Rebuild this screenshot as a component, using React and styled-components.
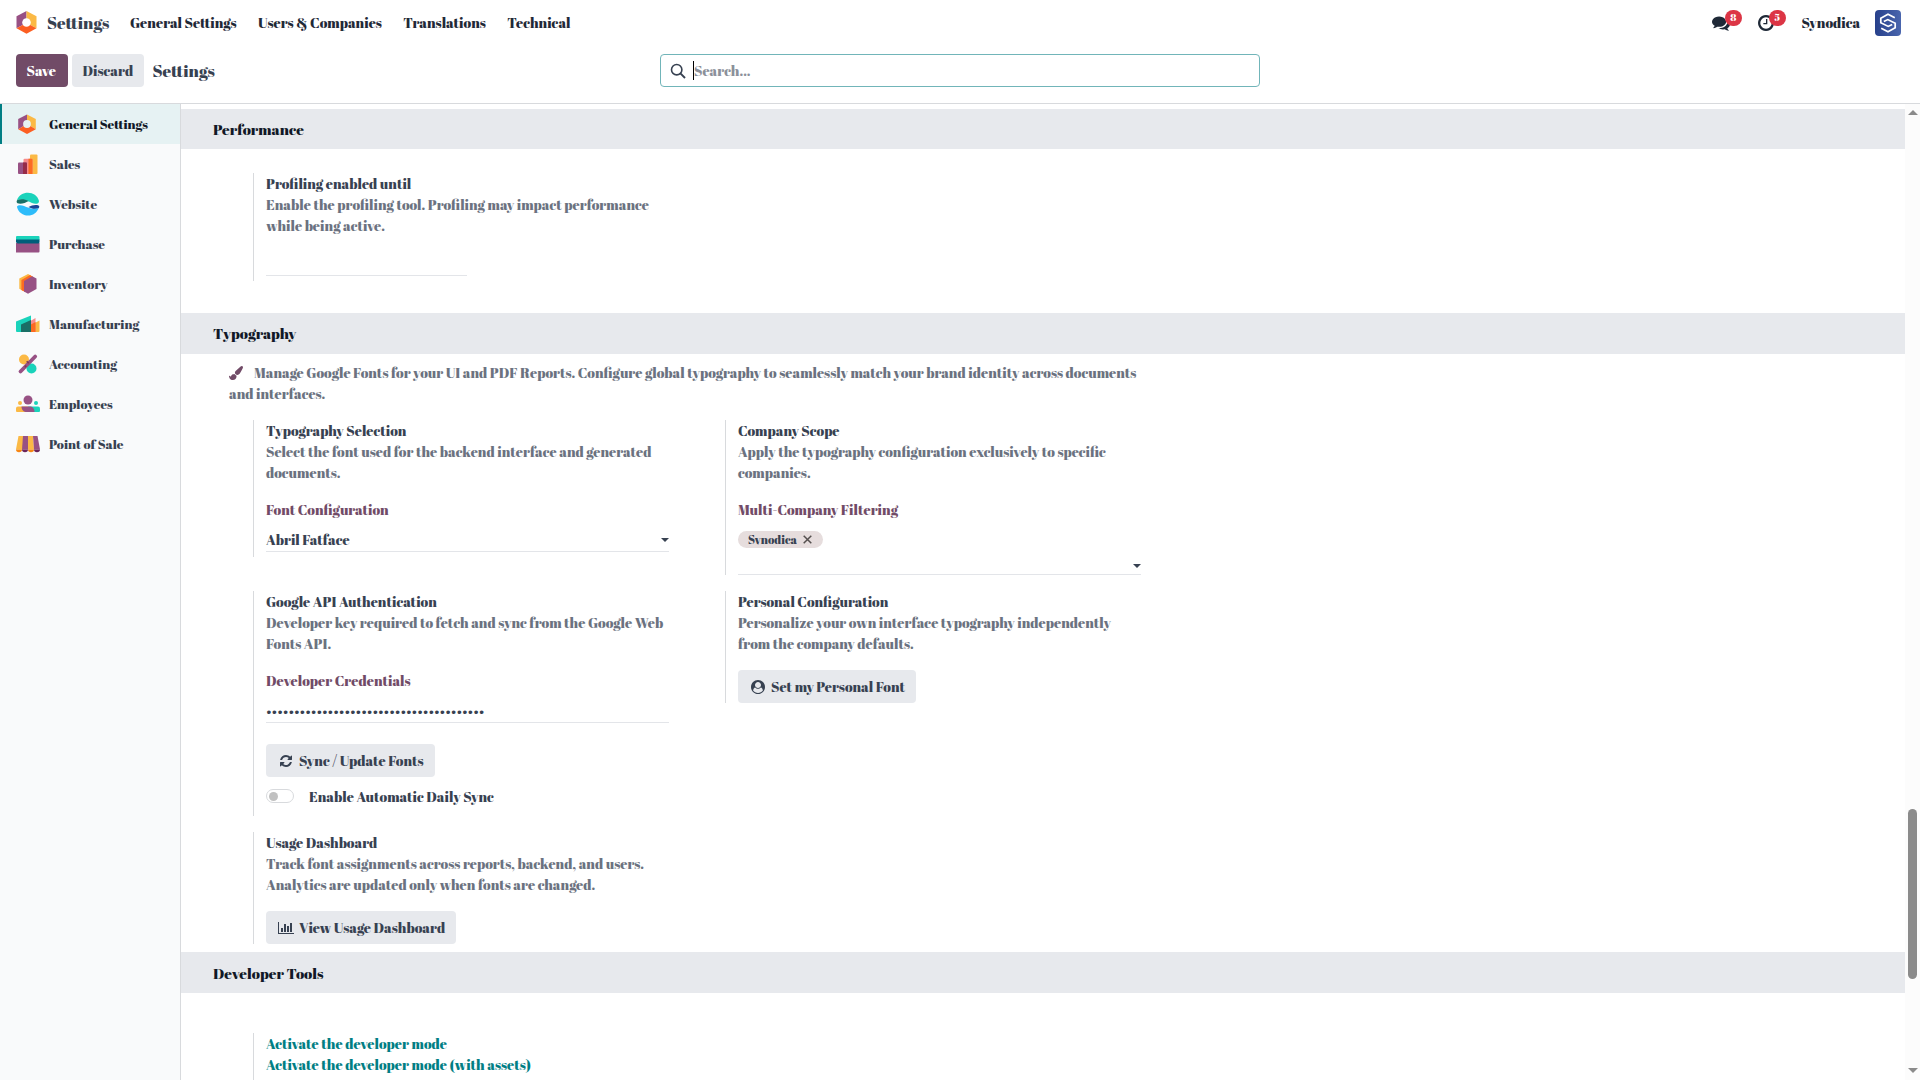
import styled, { createGlobalStyle } from 'styled-components';

const GlobalStyle = createGlobalStyle`
  *, *::before, *::after { box-sizing: border-box; }

  body {
    margin: 0;
    overflow: hidden;
    background: #fff;
    color: #374151;
    font-family: 'Abril Fatface', 'Liberation Serif', serif;
    font-size: 14px;
    font-weight: 400;
    line-height: 21px;
  }

  svg { display: block; flex: none; }
`;

const Page = styled.div`
  display: flex;
  flex-direction: column;
  height: 1080px;
`;

/* ---------- top bar ---------- */

const Navbar = styled.nav`
  display: flex;
  align-items: center;
  flex: none;
  height: 46px;
  padding: 0 19px 1px 16px;
  color: #1f2937;
`;

const Brand = styled.div`
  display: flex;
  align-items: center;
  gap: 10px;
  width: 114px;
  color: #374151;
  font-size: 16.8px;
`;

const NavLink = styled.a`
  margin-right: 21.5px;
  white-space: nowrap;
`;

const Systray = styled.div`
  display: flex;
  align-items: center;
  margin-left: auto;
`;

const TrayItem = styled.div`
  position: relative;
  display: flex;
  align-items: center;
  width: ${({ $width }) => $width}px;
  height: 17px;
`;

const Badge = styled.span`
  position: absolute;
  top: -4px;
  left: ${({ $left }) => $left}px;
  width: 17.5px;
  height: 16px;
  border-radius: 8px;
  background: #dc3545;
  color: #fff;
  font-size: 10px;
  line-height: 15px;
  text-align: center;
`;

const Company = styled.span`
  width: 73.5px;
`;

const AvatarFrame = styled.span`
  margin-top: 1px;
`;

/* ---------- control panel ---------- */

const ControlPanel = styled.header`
  display: grid;
  grid-template-columns: 644px 600px;
  align-items: start;
  flex: none;
  height: 58px;
  padding: 8px 16px 0;
  border-bottom: 1px solid #d8dadd;
`;

const Actions = styled.div`
  display: flex;
  align-items: center;
  gap: 4px;
`;

const Button = styled.button`
  display: flex;
  align-items: center;
  width: ${({ $width }) => $width}px;
  height: 33px;
  padding: 0 0 0 ${({ $pad = 10.5 }) => $pad}px;
  border: 0;
  border-radius: 4px;
  background: ${({ $primary }) => ($primary ? '#714b67' : '#e7e9ed')};
  color: ${({ $primary }) => ($primary ? '#fff' : '#374151')};
  font: inherit;
  white-space: nowrap;
`;

const ButtonIcon = styled.span`
  width: ${({ $width }) => $width}px;
`;

const PageTitle = styled.h1`
  margin: 0 0 0 4.5px;
  font-size: 16.8px;
  font-weight: 400;
  line-height: 27px;
`;

const SearchBox = styled.div`
  display: flex;
  align-items: center;
  height: 33px;
  padding-left: 9px;
  border: 1px solid #71b5b9;
  border-radius: 4px;
`;

const Placeholder = styled.span`
  display: flex;
  align-items: center;
  height: 19px;
  margin-left: 7px;
  border-left: 1px solid #000;
  color: #8b909a;
`;

/* ---------- body ---------- */

const Main = styled.main`
  display: flex;
  flex: 1;
  min-height: 0;
`;

const Sidebar = styled.aside`
  flex: none;
  width: 181px;
  border-right: 1px solid #d8dadd;
  background: #f9fafb;
  font-size: 13px;
`;

const Tab = styled.div`
  display: flex;
  align-items: center;
  gap: ${({ $active }) => ($active ? 10 : 9)}px;
  height: 40px;
  padding-left: ${({ $active }) => ($active ? 13 : 16)}px;
  border-left: ${({ $active }) => ($active ? '2px solid #017e84' : '0')};
  background: ${({ $active }) => ($active ? '#e6f2f3' : 'transparent')};
  color: ${({ $active }) => ($active ? '#111827' : '#374151')};
`;

const Content = styled.div`
  flex: 1;
  min-width: 0;
  padding-top: 5px;
  overflow: hidden;
`;

const SectionTitle = styled.h2`
  display: flex;
  align-items: center;
  height: ${({ $height = 41 }) => $height}px;
  margin: 0;
  padding: ${({ $top = 0 }) => $top}px 0 0 32px;
  background: #e7e9ed;
  color: #111827;
  font-size: 15px;
  font-weight: 400;
`;

const SettingGrid = styled.div`
  display: grid;
  grid-template-columns: 416px 416px;
  column-gap: 56px;
  row-gap: 16px;
  align-items: start;
  padding: ${({ $padding }) => $padding};
`;

const SettingBox = styled.section`
  height: ${({ $height }) => $height}px;
  padding-left: 12px;
  border-left: 1px solid #d8dadd;
`;

const Line = styled.div`
  height: 21px;
  white-space: nowrap;
`;

const Muted = styled(Line)`
  color: #6b7280;
`;

const DevLink = styled(Line)`
  color: #017e84;
`;

const FieldLabel = styled(Line)`
  margin: 16px 0 8px;
  color: #714b67;
`;

const Field = styled.div`
  display: flex;
  align-items: center;
  justify-content: space-between;
  width: 403px;
  height: 24px;
  border-bottom: 1px solid #e3e5e9;
`;

const DateField = styled(Field)`
  width: 201px;
  margin-top: 16px;
`;

const TagInput = styled(Field)`
  justify-content: flex-end;
  padding-top: 7px;
`;

const Caret = styled.i`
  border: 4px solid transparent;
  border-top-color: #374151;
  border-bottom: 0;
`;

const TagRow = styled.div`
  height: 23px;
  padding-top: 3px;
`;

const Tag = styled.span`
  display: flex;
  align-items: center;
  gap: 6px;
  width: 85px;
  height: 17px;
  padding: 0 0 1px 10px;
  border-radius: 9px;
  background: #e6dddd;
  font-size: 11.7px;
`;

/* tag labels are cut just under the baseline */
const TagLabel = styled.span`
  height: 12px;
  overflow: hidden;
  line-height: 13px;
`;

const Intro = styled.p`
  margin: 0;
  padding: 8px 0 0 48px;
  color: #6b7280;
  white-space: nowrap;
`;

const IntroRow = styled.span`
  display: flex;
  align-items: center;
  gap: 11px;
  height: 21px;
`;

const ButtonRow = styled.div`
  margin-top: ${({ $top = 16 }) => $top}px;
`;

const SwitchRow = styled.div`
  display: flex;
  align-items: center;
  gap: 15px;
  height: 21px;
  margin-top: 9px;
`;

const Switch = styled.span`
  display: flex;
  align-items: center;
  width: 28px;
  height: 14px;
  margin-top: -1px;
  padding-left: 2px;
  border: 1px solid #d8dadd;
  border-radius: 7px;
`;

const Knob = styled.i`
  width: 9px;
  height: 9px;
  border-radius: 50%;
  background: #c1c1c1;
`;

/* ---------- scrollbar ---------- */

const Scrollbar = styled.div`
  display: flex;
  flex-direction: column;
  align-items: center;
  flex: none;
  width: 15px;
  padding: 6px 0 7px;
  background: #fcfcfc;
`;

const Arrow = styled.i`
  border: 5px solid transparent;
  ${({ $up }) =>
    $up
      ? 'border-bottom-color: #8b8b8b; border-top: 0;'
      : 'border-top-color: #8b8b8b; border-bottom: 0; margin-top: auto;'}
`;

const Thumb = styled.i`
  width: 9px;
  height: 170px;
  margin-top: 694px;
  border-radius: 5px;
  background: #8b8b8b;
`;

/* ---------- icons ---------- */

const SettingsIcon = () => (
  <svg width="24" height="24" viewBox="0 0 24 24">
    <path d="M12 2.500 3.200 7v10.200L12 12z" fill="#985184" />
    <path d="M12 2.500 20.800 7v10.200L12 12z" fill="#fbb945" />
    <path d="M3.200 17.200 12 12l8.800 5.200L12 22z" fill="#fc5f22" />
    <circle cx="12" cy="12" r="3.900" fill="#e6f2f3" />
  </svg>
);

const BrandIcon = () => (
  <svg width="21" height="23" viewBox="0 0 21 23">
    <path d="M10.500 0 .5 5.300v11.900L10.500 12z" fill="#985184" />
    <path d="M10.500 0l10 5.300v11.900L10.500 12z" fill="#fbb945" />
    <path d="M.5 17.200 10.500 12l10 5.200-10 5.600z" fill="#fc5f22" />
    <circle cx="10.500" cy="11.500" r="4.300" fill="#fff" />
  </svg>
);

const SalesIcon = () => (
  <svg width="24" height="24" viewBox="0 0 24 24">
    <rect x="14" y="2.500" width="7.500" height="19.500" rx="1" fill="#fbb945" />
    <rect x="7.500" y="6.800" width="9" height="15.200" rx="1" fill="#f78c8c" />
    <path d="M12.500 6.800h3a1 1 0 0 1 1 1V22h-4z" fill="#fc6b22" />
    <rect x="2" y="10.500" width="9" height="11.500" rx="1" fill="#985184" />
    <path d="M7 10.500h3a1 1 0 0 1 1 1V22H7z" fill="#962b48" />
  </svg>
);

const WebsiteIcon = () => (
  <svg width="24" height="24" viewBox="0 0 24 24">
    <path d="M1 8C3 3 7 .8 12 .8S21.500 3.500 23 9c.3 3-4 3.500-7 2-4-2-9-4-15-3z" fill="#1ad3bb" />
    <path d="M1.300 8C5 6.500 9 7 12.500 9c-3 2-8 3.500-11 2.200C.3 10.500.5 9 1.300 8z" fill="#1a6f66" />
    <path d="M22.800 16C21 20.500 17 23.600 12 23.600S2.500 20.500 1 15c-.3-2 4-2.500 7-1 4 2 9 3.500 14.800 2z" fill="#2ebcfa" />
    <path d="M22.800 16c-3.600 1.400-7 .8-10.300-1 3-1.600 7-2.600 10-1.500 1 .5.900 1.600.3 2.500z" fill="#1a4597" />
  </svg>
);

const PurchaseIcon = () => (
  <svg width="24" height="24" viewBox="0 0 24 24">
    <path d="M1 4h21.500a1 1 0 0 1 1 1v3H0V5a1 1 0 0 1 1-1z" fill="#1ad3bb" />
    <path d="M0 11h23.500v8.500a1 1 0 0 1-1 1H0z" fill="#985184" />
    <path d="M0 7.500h23.500V10a1.500 1.500 0 0 1-1.500 1.500H2A2 2 0 0 1 0 9.500z" fill="#005e7a" />
  </svg>
);

const InventoryIcon = () => (
  <svg width="24" height="24" viewBox="0 0 24 24">
    <path d="M12 2 15 3.600 7 8.500V19l-3.700-2.200V6.600z" fill="#fbb945" />
    <path d="M14 3.100 17 4.700 9 9.300V20l-3.600-2V8z" fill="#fc6b22" />
    <path d="M16.200 4.300 20.500 6.600v10.500L12 21.800l-4-2.200V9z" fill="#985184" />
  </svg>
);

const ManufacturingIcon = () => (
  <svg width="24" height="24" viewBox="0 0 24 24">
    <path d="M15 13 23.500 8.500V19a1 1 0 0 1-1 1H15z" fill="#fbb945" />
    <path d="M11 11l8.500-5v14H11z" fill="#f78c8c" />
    <path d="M14 13l5.500-3v10H14z" fill="#fc6b22" />
    <path d="M0 9.500 15 3.500V20H1a1 1 0 0 1-1-1z" fill="#1ad3bb" />
    <path d="M5 12.500l10-4.500v12H5z" fill="#1a6f66" />
  </svg>
);

const AccountingIcon = () => (
  <svg width="24" height="24" viewBox="0 0 24 24">
    <circle cx="8" cy="7.500" r="5" fill="#fbb945" />
    <circle cx="15.500" cy="16.500" r="5" fill="#1ad3bb" />
    <path d="M4.500 19.500l14.700-15" stroke="#985184" strokeWidth="3.800" strokeLinecap="round" />
    <path d="M8.800 15.100l1.500-1.500M12.700 11.200l-2-2" stroke="#7b3a52" strokeWidth="1.500" />
  </svg>
);

const EmployeesIcon = () => (
  <svg width="24" height="24" viewBox="0 0 24 24">
    <circle cx="12" cy="8" r="4.500" fill="#985184" />
    <circle cx="4" cy="11" r="2" fill="#fbb945" />
    <circle cx="20" cy="11" r="2" fill="#1ad3bb" />
    <path d="M2 14.500h10v5.500H1a1 1 0 0 1-1-1v-2.500a2 2 0 0 1 2-2z" fill="#fbb945" />
    <path d="M12 14.500h10a2 2 0 0 1 2 2V19a1 1 0 0 1-1 1H12z" fill="#1ad3bb" />
    <path d="M5.500 14.500H14c3 0 4.500 2.500 4.500 5.500H11c-3.500 0-5.500-2-5.500-5.500z" fill="#985184" />
  </svg>
);

const PosIcon = () => (
  <svg width="24" height="24" viewBox="0 0 24 24">
    <path d="M2.500 4H7v13.500H0z" fill="#fbb945" />
    <path d="M7 4h5v13.500H6z" fill="#985184" />
    <path d="M12 4h5l1 13.500h-6z" fill="#fbb945" />
    <path d="M17 4h4.500L24 17.500h-6z" fill="#985184" />
    <path d="M0 17.500h6a3 2.800 0 0 1-6 0zM12 17.500h6a3 2.800 0 0 1-6 0z" fill="#f78613" />
    <path d="M6 17.500h6a3 2.800 0 0 1-6 0zM18 17.500h6a3 2.800 0 0 1-6 0z" fill="#6c2459" />
  </svg>
);

const CommentsIcon = () => (
  <svg width="18" height="18" viewBox="0 0 1792 1792" fill="currentColor">
    <path d="M1408 768q0 139-94 257t-256.500 186.500-353.500 68.500q-86 0-176-16-124 88-278 128-36 9-86 16h-3q-11 0-20.500-8t-11.500-21q-1-3-1-6.500t.5-6.500 2-6l2.500-5 3.500-5.500 4-5 4.500-5 4-4.500q5-6 23-25t26-29.500 22.500-29 25-38.500 20.500-44q-124-72-195-177t-71-224q0-139 94-257t256.500-186.500 353.500-68.500 353.500 68.500 256.500 186.500 94 257zm384 256q0 120-71 224.500t-195 176.500q10 24 20.500 44t25 38.500 22.500 29 26 29.500 23 25q1 1 4 4.500t4.500 5 4 5 3.500 5.500l2.500 5 2 6 .5 6.500-1 6.500q-3 14-13 22t-22 7q-50-7-86-16-154-40-278-128-90 16-176 16-271 0-472-132 58 4 88 4 161 0 309-45t264-129q125-92 192-212t67-254q0-77-23-152 129 71 204 178t75 230z" />
  </svg>
);

const ClockIcon = () => (
  <svg width="16" height="16" viewBox="128 128 1536 1536" fill="currentColor">
    <path d="M1024 544v448q0 14-9 23t-23 9h-320q-14 0-23-9t-9-23v-64q0-14 9-23t23-9h224v-352q0-14 9-23t23-9h64q14 0 23 9t9 23zm416 352q0-148-73-273t-198-198-273-73-273 73-198 198-73 273 73 273 198 198 273 73 273-73 198-198 73-273zm224 0q0 209-103 385.500t-279.500 279.500-385.500 103-385.500-103-279.500-279.500-103-385.500 103-385.500 279.500-279.500 385.500-103 385.500 103 279.500 279.500 103 385.500z" />
  </svg>
);

const AvatarIcon = () => (
  <svg width="26" height="26" viewBox="0 0 26 26">
    <defs>
      <linearGradient id="avatar" x1="0" x2="1" y1="0" y2="0">
        <stop offset="0" stopColor="#27408b" />
        <stop offset="1" stopColor="#4a66ae" />
      </linearGradient>
    </defs>
    <rect width="26" height="26" rx="4" fill="url(#avatar)" />
    <g fill="none" stroke="#fff" strokeWidth="1.700">
      <path d="M19.800 7.800 13 4.300 5.800 8.300v4.500l7.400 3.600 4-2" />
      <path d="M6.200 18.200 13 21.700l7.200-4v-4.500L12.800 9.600l-4 2" />
    </g>
  </svg>
);

const SearchIcon = () => (
  <svg width="16" height="16" viewBox="0 0 16 16" fill="none" stroke="#374151" strokeWidth="1.600">
    <circle cx="6.700" cy="6.700" r="5.200" />
    <path d="M10.400 10.400l4.600 4.600" strokeWidth="1.900" />
  </svg>
);

const BrushIcon = () => (
  <svg width="14" height="14" viewBox="0 0 1792 1792" fill="#714b67">
    <path d="M1615 0q70 0 122.500 46.500t52.500 116.500q0 63-45 151-332 629-465 752-97 91-218 91-126 0-216.500-92.500t-90.500-219.500q0-128 92-212l638-579q59-54 130-54zm-909 1034q39 76 106.500 130t150.500 76l1 71q4 213-129.500 347t-348.500 134q-123 0-218-46.500t-152.500-127.500-86.500-183-29-220q7 5 41 30t62 44.500 59 36.500 46 17q41 0 55-37 25-66 57.500-112.500t69.500-76 88-47.500 103-25.500 125-10.500z" />
  </svg>
);

const RefreshIcon = () => (
  <svg width="12" height="12" viewBox="0 0 1536 1536" fill="currentColor">
    <path d="M1511 928q0 5-1 7-64 268-268 434.500t-478 166.500q-146 0-282.500-55t-243.500-157l-129 129q-19 19-45 19t-45-19-19-45v-448q0-26 19-45t45-19h448q26 0 45 19t19 45-19 45l-137 137q71 66 161 102t187 36q134 0 250-65t186-179q11-17 53-117 8-23 30-23h192q13 0 22.500 9.500t9.500 22.500zm25-800v448q0 26-19 45t-45 19h-448q-26 0-45-19t-19-45 19-45l138-138q-148-137-349-137-134 0-250 65t-186 179q-11 17-53 117-8 23-30 23h-199q-13 0-22.500-9.500t-9.500-22.500v-7q65-268 270-434.500t480-166.500q146 0 284 55.500t245 156.500l130-129q19-19 45-19t45 19 19 45z" />
  </svg>
);

const UserCircleIcon = () => (
  <svg width="14" height="14" viewBox="0 0 1792 1792" fill="currentColor" fillRule="evenodd">
    <path d="M1523 1339q-22-155-87.500-257.500t-184.500-118.500q-67 74-159.500 115.500t-195.500 41.500-195.500-41.500-159.500-115.500q-119 16-184.500 118.500t-87.500 257.500q106 150 271 237.500t356 87.500 356-87.500 271-237.500zm-243-699q0-159-112.500-271.500t-271.500-112.500-271.500 112.500-112.500 271.500 112.500 271.500 271.500 112.500 271.500-112.500 112.500-271.500zm512 256q0 182-71 347.500t-190.500 286-285.500 191.500-349 71q-182 0-348-71t-286-191-191-286-71-348 71-348 191-286 286-191 348-71 348 71 286 191 191 286 71 348z" />
  </svg>
);

const ChartIcon = () => (
  <svg width="16" height="14" viewBox="0 0 2048 1792" fill="currentColor">
    <path d="M640 896v512h-256v-512h256zm384-512v1024h-256v-1024h256zm1024 1152v128h-2048v-1536h128v1408h1920zm-640-896v768h-256v-768h256zm384-384v1152h-256v-1152h256z" />
  </svg>
);

const CloseIcon = () => (
  <svg width="9" height="9" viewBox="0 0 9 9" stroke="#55504f" strokeWidth="1.500">
    <path d="M.7.7l7.600 7.600M8.300.7L.7 8.300" />
  </svg>
);

const navLinks = ['General Settings', 'Users & Companies', 'Translations', 'Technical'];

const tabs = [
  { label: 'General Settings', icon: SettingsIcon },
  { label: 'Sales', icon: SalesIcon },
  { label: 'Website', icon: WebsiteIcon },
  { label: 'Purchase', icon: PurchaseIcon },
  { label: 'Inventory', icon: InventoryIcon },
  { label: 'Manufacturing', icon: ManufacturingIcon },
  { label: 'Accounting', icon: AccountingIcon },
  { label: 'Employees', icon: EmployeesIcon },
  { label: 'Point of Sale', icon: PosIcon },
];

function App() {
  return (
    <Page>
      <GlobalStyle />

      <Navbar>
        <Brand>
          <BrandIcon />
          <span>Settings</span>
        </Brand>
        {navLinks.map((label) => (
          <NavLink key={label}>{label}</NavLink>
        ))}
        <Systray>
          <TrayItem $width={46}>
            <CommentsIcon />
            <Badge $left={12.5}>8</Badge>
          </TrayItem>
          <TrayItem $width={43.5}>
            <ClockIcon />
            <Badge $left={10.5}>5</Badge>
          </TrayItem>
          <Company>Synodica</Company>
          <AvatarFrame>
            <AvatarIcon />
          </AvatarFrame>
        </Systray>
      </Navbar>

      <ControlPanel>
        <Actions>
          <Button $primary $width={52}>Save</Button>
          <Button $width={72}>Discard</Button>
          <PageTitle>Settings</PageTitle>
        </Actions>
        <SearchBox>
          <SearchIcon />
          <Placeholder>Search...</Placeholder>
        </SearchBox>
      </ControlPanel>

      <Main>
        <Sidebar>
          {tabs.map(({ label, icon: Icon }, index) => (
            <Tab key={label} $active={index === 0}>
              <Icon />
              <span>{label}</span>
            </Tab>
          ))}
        </Sidebar>

        <Content>
          <SectionTitle $height={40}>Performance</SectionTitle>
          <SettingGrid $padding="24px 0 32px 72px">
            <SettingBox $height={108}>
              <Line>Profiling enabled until</Line>
              <Muted>Enable the profiling tool. Profiling may impact performance</Muted>
              <Muted>while being active.</Muted>
              <DateField />
            </SettingBox>
          </SettingGrid>

          <SectionTitle>Typography</SectionTitle>
          <Intro>
            <IntroRow>
              <BrushIcon />
              <span>
                Manage Google Fonts for your UI and PDF Reports. Configure global typography to
                seamlessly match your brand identity across documents
              </span>
            </IntroRow>
            and interfaces.
          </Intro>
          <SettingGrid $padding="16px 0 8px 72px">
            <SettingBox $height={137}>
              <Line>Typography Selection</Line>
              <Muted>Select the font used for the backend interface and generated</Muted>
              <Muted>documents.</Muted>
              <FieldLabel>Font Configuration</FieldLabel>
              <Field>
                <span>Abril Fatface</span>
                <Caret />
              </Field>
            </SettingBox>

            <SettingBox $height={155}>
              <Line>Company Scope</Line>
              <Muted>Apply the typography configuration exclusively to specific</Muted>
              <Muted>companies.</Muted>
              <FieldLabel>Multi-Company Filtering</FieldLabel>
              <TagRow>
                <Tag>
                  <TagLabel>Synodica</TagLabel>
                  <CloseIcon />
                </Tag>
              </TagRow>
              <TagInput>
                <Caret />
              </TagInput>
            </SettingBox>

            <SettingBox $height={225}>
              <Line>Google API Authentication</Line>
              <Muted>Developer key required to fetch and sync from the Google Web</Muted>
              <Muted>Fonts API.</Muted>
              <FieldLabel>Developer Credentials</FieldLabel>
              <Field>{'•'.repeat(39)}</Field>
              <ButtonRow $top={21}>
                <Button $width={169} $pad={14}>
                  <ButtonIcon $width={19}>
                    <RefreshIcon />
                  </ButtonIcon>
                  Sync / Update Fonts
                </Button>
              </ButtonRow>
              <SwitchRow>
                <Switch>
                  <Knob />
                </Switch>
                <span>Enable Automatic Daily Sync</span>
              </SwitchRow>
            </SettingBox>

            <SettingBox $height={112}>
              <Line>Personal Configuration</Line>
              <Muted>Personalize your own interface typography independently</Muted>
              <Muted>from the company defaults.</Muted>
              <ButtonRow>
                <Button $width={178} $pad={13}>
                  <ButtonIcon $width={20}>
                    <UserCircleIcon />
                  </ButtonIcon>
                  Set my Personal Font
                </Button>
              </ButtonRow>
            </SettingBox>

            <SettingBox $height={112}>
              <Line>Usage Dashboard</Line>
              <Muted>Track font assignments across reports, backend, and users.</Muted>
              <Muted>Analytics are updated only when fonts are changed.</Muted>
              <ButtonRow>
                <Button $width={190} $pad={12}>
                  <ButtonIcon $width={21}>
                    <ChartIcon />
                  </ButtonIcon>
                  View Usage Dashboard
                </Button>
              </ButtonRow>
            </SettingBox>
          </SettingGrid>

          <SectionTitle $top={2}>Developer Tools</SectionTitle>
          <SettingGrid $padding="40px 0 0 72px">
            <SettingBox $height={80}>
              <DevLink>Activate the developer mode</DevLink>
              <DevLink>Activate the developer mode (with assets)</DevLink>
            </SettingBox>
          </SettingGrid>
        </Content>

        <Scrollbar>
          <Arrow $up />
          <Thumb />
          <Arrow />
        </Scrollbar>
      </Main>
    </Page>
  );
}

export default App;
